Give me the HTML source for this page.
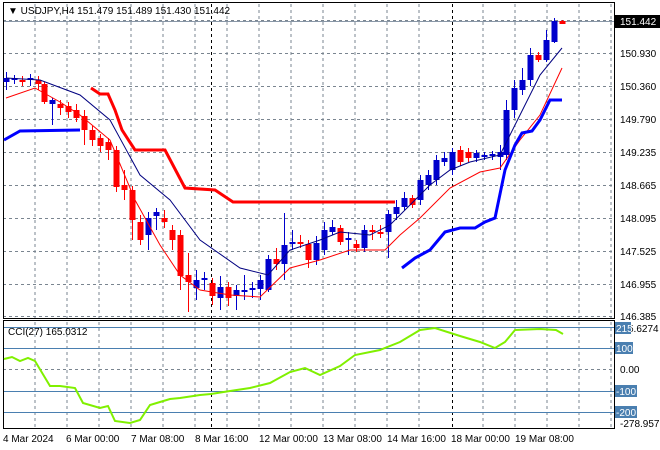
<!DOCTYPE html>
<html><head><meta charset="utf-8"><style>
body{margin:0;background:#fff;}
svg{display:block;font-family:"Liberation Sans",sans-serif;font-size:10px;}
</style></head><body>
<svg width="660" height="450" viewBox="0 0 660 450" xmlns="http://www.w3.org/2000/svg">
<rect width="660" height="450" fill="#fff"/>
<g stroke="#7a8590" stroke-dasharray="3,3" stroke-width="1">
<path d="M35 4V428M67 4V428M99 4V428M131 4V428M163 4V428M195 4V428M227 4V428M259 4V428M291 4V428M323 4V428M355 4V428M387 4V428M419 4V428M483 4V428M515 4V428M547 4V428M579 4V428M611 4V428"/>
<path d="M3 20.5H614M3 53.5H614M3 86.5H614M3 119.5H614M3 152.5H614M3 185.5H614M3 218.5H614M3 251.5H614M3 284.5H614M3 316.5H614M3 369.5H614"/>
</g>
<g stroke="#000" stroke-dasharray="3,3"><path d="M211.5 4V428M452.5 4V428"/></g>
<path d="M3 21.5H614" stroke="#8a98a8"/>
<g stroke="#4a7fb0"><path d="M3 327.5H614M3 348.5H614M3 391.5H614M3 412.5H614"/></g>
<rect x="3.5" y="2.5" width="611" height="316" fill="none" stroke="#000"/>
<rect x="3.5" y="320.5" width="611" height="108" fill="none" stroke="#000"/>
<g id="c"></g>
<polyline fill="none" stroke="#000080" stroke-width="1" points="6,78 40,80 80,95 110,120 140,175 170,200 200,240 240,268 268,275 290,250 320,240 340,232 370,235 390,225 410,205 430,185 450,170 470,162 500,155 520,115 540,75 562,48"/>
<polyline fill="none" stroke="#f00" stroke-width="1" points="6,98 35,88 60,102 80,115 110,140 135,200 160,245 180,275 200,290 230,295 260,297 290,268 320,260 350,250 385,250 400,235 420,218 450,188 480,172 500,168 520,140 540,115 562,68"/>
<polyline fill="none" stroke="#f00" stroke-width="3" points="91,88 100,94 108,94 115,110 122,130 135,150 165,150 185,188 215,190 233,202 395,202"/>
<polyline fill="none" stroke="#0000ff" stroke-width="3" points="4,140 20,131 80,130"/>
<polyline fill="none" stroke="#0000ff" stroke-width="3" points="402,268 415,258 430,250 445,232 460,228 475,228 485,222 495,218 505,170 515,145 522,133 532,131 540,120 550,100 562,100"/>
<polyline fill="none" stroke="#80f000" stroke-width="2" points="4,359 12,357 20,361 28,358 35,361 50,386 60,386 75,388 83,403 100,408 108,406 115,421 130,423 140,420 150,405 160,402 170,399 180,398 200,395 211,394 230,391 250,388 270,383 290,372 305,368 320,375 340,366 355,355 380,350 400,342 420,330 435,328 460,336 480,342 495,348 505,342 515,330 540,329 556,330 563,334"/>
<text x="8" y="14" fill="#000">▼ USDJPY,H4  151.479 151.489 151.430 151.442</text>
<text x="8" y="335" fill="#000">CCI(27) 165.0312</text>
<g fill="#000">
<text x="620" y="57">150.930</text><text x="620" y="90">150.360</text><text x="620" y="123">149.790</text><text x="620" y="156">149.235</text><text x="620" y="189">148.665</text><text x="620" y="222">148.095</text><text x="620" y="255">147.525</text><text x="620" y="288">146.955</text><text x="620" y="320">146.385</text>
<text x="620" y="373">0.00</text><text x="620" y="427">-278.9579</text><text x="628" y="332">5.6274</text>
</g>
<rect x="615" y="15" width="45" height="13" fill="#000"/><text x="620" y="25" fill="#fff">151.442</text>
<g fill="#4a7fb0"><rect x="615" y="322" width="16" height="12"/><rect x="615" y="342" width="18" height="12"/><rect x="615" y="385" width="22" height="12"/><rect x="615" y="406" width="22" height="12"/></g>
<g fill="#fff"><text x="616" y="332">215</text><text x="616" y="352">100</text><text x="616" y="395">-100</text><text x="616" y="416">-200</text></g>
<g fill="#000"><text x="3" y="442">4 Mar 2024</text><text x="66" y="442">6 Mar 00:00</text><text x="131" y="442">7 Mar 08:00</text><text x="195" y="442">8 Mar 16:00</text><text x="259" y="442">12 Mar 00:00</text><text x="323" y="442">13 Mar 08:00</text><text x="387" y="442">14 Mar 16:00</text><text x="451" y="442">18 Mar 00:00</text><text x="515" y="442">19 Mar 08:00</text></g>
</svg>
<script>
var d=[[6,78,82,72,90,'b'],[14,78,80,75,84,'b'],[22,80,82,76,86,'r'],[30,78,80,74,86,'b'],[38,80,84,76,90,'r'],[44,84,102,82,104,'r'],[52,100,104,98,125,'b'],[60,104,108,100,115,'r'],[68,106,112,102,118,'r'],[76,110,118,104,122,'r'],[84,116,130,110,145,'r'],[92,130,140,126,146,'r'],[100,138,146,134,152,'r'],[108,142,150,138,160,'r'],[116,150,187,146,192,'r'],[124,185,190,170,200,'r'],[132,190,220,186,240,'r'],[140,222,240,215,245,'r'],[148,235,218,212,250,'b'],[156,216,212,208,230,'b'],[164,218,222,210,228,'r'],[172,230,240,225,250,'r'],[180,235,276,230,290,'r'],[188,275,282,253,312,'r'],[196,288,280,270,300,'b'],[204,280,278,272,290,'b'],[212,283,296,278,305,'r'],[220,298,287,276,310,'b'],[228,287,298,282,306,'r'],[236,296,290,285,310,'b'],[244,292,290,275,300,'b'],[252,290,288,282,298,'b'],[260,289,280,275,300,'b'],[268,290,259,255,292,'b'],[276,259,264,248,270,'r'],[284,264,245,213,280,'b'],[292,244,242,230,250,'b'],[300,242,244,235,248,'r'],[308,244,260,240,268,'r'],[316,260,243,236,265,'b'],[324,250,230,222,255,'b'],[332,232,227,220,235,'b'],[340,228,242,225,245,'r'],[348,240,238,232,255,'b'],[356,244,248,240,252,'r'],[364,248,230,225,252,'b'],[372,230,232,225,240,'r'],[380,232,234,225,238,'r'],[388,232,214,210,258,'b'],[396,214,207,200,220,'b'],[404,207,198,192,210,'b'],[412,198,205,195,208,'r'],[420,200,180,175,205,'b'],[428,185,175,170,190,'b'],[436,180,160,155,185,'b'],[444,162,158,152,166,'b'],[452,170,152,148,175,'b'],[460,150,162,146,166,'r'],[468,152,158,148,162,'r'],[476,158,153,150,162,'b'],[484,157,155,152,160,'b'],[492,156,154,151,160,'b'],[500,157,152,145,170,'b'],[506,155,110,100,160,'b'],[514,110,88,80,118,'b'],[522,90,80,68,95,'b'],[530,80,55,48,86,'b'],[538,55,60,52,62,'r'],[546,60,40,30,62,'b'],[554,42,21,18,43,'b'],[562,21,24,20,24,'r']];
var s='';d.forEach(function(c){var col=c[5]=='b'?'#0000cc':'#f00';var t=Math.min(c[1],c[2]),h=Math.max(2,Math.abs(c[1]-c[2]));
s+='<line x1="'+(c[0]+.5)+'" x2="'+(c[0]+.5)+'" y1="'+c[3]+'" y2="'+c[4]+'" stroke="'+col+'"/><rect x="'+(c[0]-2.5)+'" y="'+t+'" width="6" height="'+h+'" fill="'+col+'"/>';});
document.getElementById('c').innerHTML=s;
</script>
</body></html>
